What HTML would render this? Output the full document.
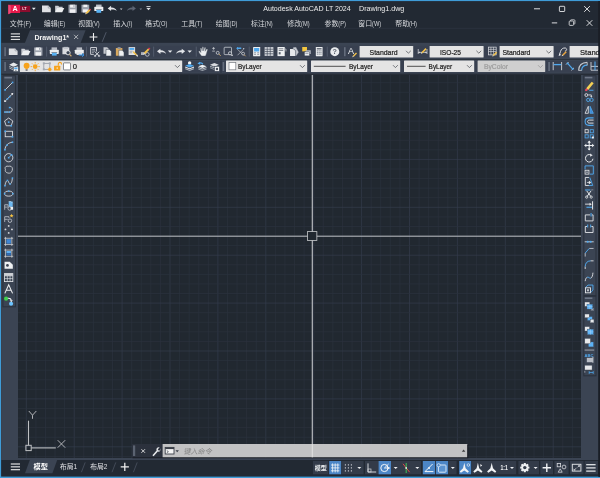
<!DOCTYPE html>
<html lang="zh-CN"><head><meta charset="utf-8"><title>Autodesk AutoCAD LT 2024 - Drawing1.dwg</title>
<style>
html,body{margin:0;padding:0;background:#3f9cd8;overflow:hidden}
body{width:600px;height:478px;position:relative;font-family:"Liberation Sans","Noto Sans CJK SC",sans-serif}
#app{position:absolute;left:0;top:0;width:600px;height:478px;display:block;will-change:transform;filter:blur(0.25px)}
#app text{font-family:"Liberation Sans","Noto Sans CJK SC",sans-serif}
</style></head><body>
<svg id="app" width="600" height="478" viewBox="0 0 600 478">
<rect x="0" y="0" width="600" height="478" fill="#3f9cd8" />
<rect x="1.1" y="1.1" width="598.9" height="475.5" fill="#222933" />
<rect x="598.6" y="1.1" width="1.4" height="475.5" fill="#191d25" />
<rect x="1.1" y="42.8" width="597.5" height="32.2" fill="#3b4453" />
<rect x="2.4" y="45.9" width="596" height="11.4" fill="#384050" />
<rect x="2.4" y="61" width="596" height="11.2" fill="#384050" />
<rect x="1.5" y="59.1" width="597.5" height="0.9" fill="#2a313c" />
<rect x="1.5" y="73.6" width="597.5" height="1.6" fill="#272d37" />
<rect x="220.6" y="60.4" width="0.8" height="12.6" fill="#2a313c" />
<rect x="1.1" y="75" width="16.9" height="385" fill="#3b4453" />
<rect x="581" y="75" width="17.6" height="385" fill="#3b4453" />
<rect x="1.1" y="458" width="597.5" height="2" fill="#3b4453" />
<rect x="18" y="75" width="563" height="383" fill="#212830" />
<g><line x1="26.30" y1="75" x2="26.30" y2="458" stroke="#363d4e" stroke-width="0.66" /><line x1="35.88" y1="75" x2="35.88" y2="458" stroke="#2b323e" stroke-width="0.7" /><line x1="45.46" y1="75" x2="45.46" y2="458" stroke="#2b323e" stroke-width="0.7" /><line x1="55.04" y1="75" x2="55.04" y2="458" stroke="#2b323e" stroke-width="0.7" /><line x1="64.62" y1="75" x2="64.62" y2="458" stroke="#2b323e" stroke-width="0.7" /><line x1="74.20" y1="75" x2="74.20" y2="458" stroke="#363d4e" stroke-width="0.66" /><line x1="83.78" y1="75" x2="83.78" y2="458" stroke="#2b323e" stroke-width="0.7" /><line x1="93.36" y1="75" x2="93.36" y2="458" stroke="#2b323e" stroke-width="0.7" /><line x1="102.94" y1="75" x2="102.94" y2="458" stroke="#2b323e" stroke-width="0.7" /><line x1="112.52" y1="75" x2="112.52" y2="458" stroke="#2b323e" stroke-width="0.7" /><line x1="122.10" y1="75" x2="122.10" y2="458" stroke="#363d4e" stroke-width="0.66" /><line x1="131.68" y1="75" x2="131.68" y2="458" stroke="#2b323e" stroke-width="0.7" /><line x1="141.26" y1="75" x2="141.26" y2="458" stroke="#2b323e" stroke-width="0.7" /><line x1="150.84" y1="75" x2="150.84" y2="458" stroke="#2b323e" stroke-width="0.7" /><line x1="160.42" y1="75" x2="160.42" y2="458" stroke="#2b323e" stroke-width="0.7" /><line x1="170.00" y1="75" x2="170.00" y2="458" stroke="#363d4e" stroke-width="0.66" /><line x1="179.58" y1="75" x2="179.58" y2="458" stroke="#2b323e" stroke-width="0.7" /><line x1="189.16" y1="75" x2="189.16" y2="458" stroke="#2b323e" stroke-width="0.7" /><line x1="198.74" y1="75" x2="198.74" y2="458" stroke="#2b323e" stroke-width="0.7" /><line x1="208.32" y1="75" x2="208.32" y2="458" stroke="#2b323e" stroke-width="0.7" /><line x1="217.90" y1="75" x2="217.90" y2="458" stroke="#363d4e" stroke-width="0.66" /><line x1="227.48" y1="75" x2="227.48" y2="458" stroke="#2b323e" stroke-width="0.7" /><line x1="237.06" y1="75" x2="237.06" y2="458" stroke="#2b323e" stroke-width="0.7" /><line x1="246.64" y1="75" x2="246.64" y2="458" stroke="#2b323e" stroke-width="0.7" /><line x1="256.22" y1="75" x2="256.22" y2="458" stroke="#2b323e" stroke-width="0.7" /><line x1="265.80" y1="75" x2="265.80" y2="458" stroke="#363d4e" stroke-width="0.66" /><line x1="275.38" y1="75" x2="275.38" y2="458" stroke="#2b323e" stroke-width="0.7" /><line x1="284.96" y1="75" x2="284.96" y2="458" stroke="#2b323e" stroke-width="0.7" /><line x1="294.54" y1="75" x2="294.54" y2="458" stroke="#2b323e" stroke-width="0.7" /><line x1="304.12" y1="75" x2="304.12" y2="458" stroke="#2b323e" stroke-width="0.7" /><line x1="313.70" y1="75" x2="313.70" y2="458" stroke="#363d4e" stroke-width="0.66" /><line x1="323.28" y1="75" x2="323.28" y2="458" stroke="#2b323e" stroke-width="0.7" /><line x1="332.86" y1="75" x2="332.86" y2="458" stroke="#2b323e" stroke-width="0.7" /><line x1="342.44" y1="75" x2="342.44" y2="458" stroke="#2b323e" stroke-width="0.7" /><line x1="352.02" y1="75" x2="352.02" y2="458" stroke="#2b323e" stroke-width="0.7" /><line x1="361.60" y1="75" x2="361.60" y2="458" stroke="#363d4e" stroke-width="0.66" /><line x1="371.18" y1="75" x2="371.18" y2="458" stroke="#2b323e" stroke-width="0.7" /><line x1="380.76" y1="75" x2="380.76" y2="458" stroke="#2b323e" stroke-width="0.7" /><line x1="390.34" y1="75" x2="390.34" y2="458" stroke="#2b323e" stroke-width="0.7" /><line x1="399.92" y1="75" x2="399.92" y2="458" stroke="#2b323e" stroke-width="0.7" /><line x1="409.50" y1="75" x2="409.50" y2="458" stroke="#363d4e" stroke-width="0.66" /><line x1="419.08" y1="75" x2="419.08" y2="458" stroke="#2b323e" stroke-width="0.7" /><line x1="428.66" y1="75" x2="428.66" y2="458" stroke="#2b323e" stroke-width="0.7" /><line x1="438.24" y1="75" x2="438.24" y2="458" stroke="#2b323e" stroke-width="0.7" /><line x1="447.82" y1="75" x2="447.82" y2="458" stroke="#2b323e" stroke-width="0.7" /><line x1="457.40" y1="75" x2="457.40" y2="458" stroke="#363d4e" stroke-width="0.66" /><line x1="466.98" y1="75" x2="466.98" y2="458" stroke="#2b323e" stroke-width="0.7" /><line x1="476.56" y1="75" x2="476.56" y2="458" stroke="#2b323e" stroke-width="0.7" /><line x1="486.14" y1="75" x2="486.14" y2="458" stroke="#2b323e" stroke-width="0.7" /><line x1="495.72" y1="75" x2="495.72" y2="458" stroke="#2b323e" stroke-width="0.7" /><line x1="505.30" y1="75" x2="505.30" y2="458" stroke="#363d4e" stroke-width="0.66" /><line x1="514.88" y1="75" x2="514.88" y2="458" stroke="#2b323e" stroke-width="0.7" /><line x1="524.46" y1="75" x2="524.46" y2="458" stroke="#2b323e" stroke-width="0.7" /><line x1="534.04" y1="75" x2="534.04" y2="458" stroke="#2b323e" stroke-width="0.7" /><line x1="543.62" y1="75" x2="543.62" y2="458" stroke="#2b323e" stroke-width="0.7" /><line x1="553.20" y1="75" x2="553.20" y2="458" stroke="#363d4e" stroke-width="0.66" /><line x1="562.78" y1="75" x2="562.78" y2="458" stroke="#2b323e" stroke-width="0.7" /><line x1="572.36" y1="75" x2="572.36" y2="458" stroke="#2b323e" stroke-width="0.7" /><line x1="18" y1="82.76" x2="581" y2="82.76" stroke="#2b323e" stroke-width="0.7" /><line x1="18" y1="92.34" x2="581" y2="92.34" stroke="#2b323e" stroke-width="0.7" /><line x1="18" y1="101.92" x2="581" y2="101.92" stroke="#2b323e" stroke-width="0.7" /><line x1="18" y1="111.50" x2="581" y2="111.50" stroke="#363d4e" stroke-width="0.66" /><line x1="18" y1="121.08" x2="581" y2="121.08" stroke="#2b323e" stroke-width="0.7" /><line x1="18" y1="130.66" x2="581" y2="130.66" stroke="#2b323e" stroke-width="0.7" /><line x1="18" y1="140.24" x2="581" y2="140.24" stroke="#2b323e" stroke-width="0.7" /><line x1="18" y1="149.82" x2="581" y2="149.82" stroke="#2b323e" stroke-width="0.7" /><line x1="18" y1="159.40" x2="581" y2="159.40" stroke="#363d4e" stroke-width="0.66" /><line x1="18" y1="168.98" x2="581" y2="168.98" stroke="#2b323e" stroke-width="0.7" /><line x1="18" y1="178.56" x2="581" y2="178.56" stroke="#2b323e" stroke-width="0.7" /><line x1="18" y1="188.14" x2="581" y2="188.14" stroke="#2b323e" stroke-width="0.7" /><line x1="18" y1="197.72" x2="581" y2="197.72" stroke="#2b323e" stroke-width="0.7" /><line x1="18" y1="207.30" x2="581" y2="207.30" stroke="#363d4e" stroke-width="0.66" /><line x1="18" y1="216.88" x2="581" y2="216.88" stroke="#2b323e" stroke-width="0.7" /><line x1="18" y1="226.46" x2="581" y2="226.46" stroke="#2b323e" stroke-width="0.7" /><line x1="18" y1="236.04" x2="581" y2="236.04" stroke="#2b323e" stroke-width="0.7" /><line x1="18" y1="245.62" x2="581" y2="245.62" stroke="#2b323e" stroke-width="0.7" /><line x1="18" y1="255.20" x2="581" y2="255.20" stroke="#363d4e" stroke-width="0.66" /><line x1="18" y1="264.78" x2="581" y2="264.78" stroke="#2b323e" stroke-width="0.7" /><line x1="18" y1="274.36" x2="581" y2="274.36" stroke="#2b323e" stroke-width="0.7" /><line x1="18" y1="283.94" x2="581" y2="283.94" stroke="#2b323e" stroke-width="0.7" /><line x1="18" y1="293.52" x2="581" y2="293.52" stroke="#2b323e" stroke-width="0.7" /><line x1="18" y1="303.10" x2="581" y2="303.10" stroke="#363d4e" stroke-width="0.66" /><line x1="18" y1="312.68" x2="581" y2="312.68" stroke="#2b323e" stroke-width="0.7" /><line x1="18" y1="322.26" x2="581" y2="322.26" stroke="#2b323e" stroke-width="0.7" /><line x1="18" y1="331.84" x2="581" y2="331.84" stroke="#2b323e" stroke-width="0.7" /><line x1="18" y1="341.42" x2="581" y2="341.42" stroke="#2b323e" stroke-width="0.7" /><line x1="18" y1="351.00" x2="581" y2="351.00" stroke="#363d4e" stroke-width="0.66" /><line x1="18" y1="360.58" x2="581" y2="360.58" stroke="#2b323e" stroke-width="0.7" /><line x1="18" y1="370.16" x2="581" y2="370.16" stroke="#2b323e" stroke-width="0.7" /><line x1="18" y1="379.74" x2="581" y2="379.74" stroke="#2b323e" stroke-width="0.7" /><line x1="18" y1="389.32" x2="581" y2="389.32" stroke="#2b323e" stroke-width="0.7" /><line x1="18" y1="398.90" x2="581" y2="398.90" stroke="#363d4e" stroke-width="0.66" /><line x1="18" y1="408.48" x2="581" y2="408.48" stroke="#2b323e" stroke-width="0.7" /><line x1="18" y1="418.06" x2="581" y2="418.06" stroke="#2b323e" stroke-width="0.7" /><line x1="18" y1="427.64" x2="581" y2="427.64" stroke="#2b323e" stroke-width="0.7" /><line x1="18" y1="437.22" x2="581" y2="437.22" stroke="#2b323e" stroke-width="0.7" /><line x1="18" y1="446.80" x2="581" y2="446.80" stroke="#363d4e" stroke-width="0.66" /><line x1="18" y1="456.38" x2="581" y2="456.38" stroke="#2b323e" stroke-width="0.7" /></g>
<line x1="18" y1="236.2" x2="581" y2="236.2" stroke="#c6c8cb" stroke-width="0.95" />
<line x1="312.3" y1="75" x2="312.3" y2="458" stroke="#bcbec2" stroke-width="1.15" />
<rect x="307.45" y="231.6" width="9.4" height="8.8" fill="#212830" stroke="#c9cbce" stroke-width="0.8"/>
<line x1="28.5" y1="420.7" x2="28.5" y2="445.4" stroke="#bfc1c4" stroke-width="1.1" />
<line x1="31.3" y1="447.9" x2="55.8" y2="447.9" stroke="#bfc1c4" stroke-width="1.1" />
<rect x="25.9" y="445.3" width="5.3" height="5.3" fill="none" stroke="#bfc1c4" stroke-width="1"/>
<path d="M28.8 411 L32.5 415.2 L36.3 411 M32.5 415.2 L32.5 418.8" fill="none" stroke="#bfc1c4" stroke-width="0.9" />
<path d="M57.7 440.2 L65.2 447.7 M65.2 440.2 L57.7 447.7" fill="none" stroke="#bfc1c4" stroke-width="0.9" />
<text x="263.3" y="10.7" font-size="7.55" fill="#ececec" text-anchor="start" textLength="87.4" lengthAdjust="spacingAndGlyphs">Autodesk AutoCAD LT 2024</text>
<text x="359" y="10.7" font-size="7.55" fill="#ececec" text-anchor="start" textLength="45.3" lengthAdjust="spacingAndGlyphs">Drawing1.dwg</text>
<g><text x="9.80" y="26.10" font-size="6.9" fill="#d6d8dc" textLength="13.8" lengthAdjust="spacingAndGlyphs">文件</text><text x="23.60" y="26.10" font-size="6.49" fill="#d6d8dc" textLength="7.29" lengthAdjust="spacingAndGlyphs">(F)</text></g>
<g><text x="43.80" y="26.10" font-size="6.9" fill="#d6d8dc" textLength="13.8" lengthAdjust="spacingAndGlyphs">编辑</text><text x="57.60" y="26.10" font-size="6.49" fill="#d6d8dc" textLength="7.61" lengthAdjust="spacingAndGlyphs">(E)</text></g>
<g><text x="78.30" y="26.10" font-size="6.9" fill="#d6d8dc" textLength="13.8" lengthAdjust="spacingAndGlyphs">视图</text><text x="92.10" y="26.10" font-size="6.49" fill="#d6d8dc" textLength="7.61" lengthAdjust="spacingAndGlyphs">(V)</text></g>
<g><text x="113.30" y="26.10" font-size="6.9" fill="#d6d8dc" textLength="13.8" lengthAdjust="spacingAndGlyphs">插入</text><text x="127.10" y="26.10" font-size="6.49" fill="#d6d8dc" textLength="5.39" lengthAdjust="spacingAndGlyphs">(I)</text></g>
<g><text x="145.30" y="26.10" font-size="6.9" fill="#d6d8dc" textLength="13.8" lengthAdjust="spacingAndGlyphs">格式</text><text x="159.10" y="26.10" font-size="6.49" fill="#d6d8dc" textLength="8.24" lengthAdjust="spacingAndGlyphs">(O)</text></g>
<g><text x="181.30" y="26.10" font-size="6.9" fill="#d6d8dc" textLength="13.8" lengthAdjust="spacingAndGlyphs">工具</text><text x="195.10" y="26.10" font-size="6.49" fill="#d6d8dc" textLength="7.29" lengthAdjust="spacingAndGlyphs">(T)</text></g>
<g><text x="215.80" y="26.10" font-size="6.9" fill="#d6d8dc" textLength="13.8" lengthAdjust="spacingAndGlyphs">绘图</text><text x="229.60" y="26.10" font-size="6.49" fill="#d6d8dc" textLength="7.92" lengthAdjust="spacingAndGlyphs">(D)</text></g>
<g><text x="251.05" y="26.10" font-size="6.9" fill="#d6d8dc" textLength="13.8" lengthAdjust="spacingAndGlyphs">标注</text><text x="264.85" y="26.10" font-size="6.49" fill="#d6d8dc" textLength="7.92" lengthAdjust="spacingAndGlyphs">(N)</text></g>
<g><text x="287.30" y="26.10" font-size="6.9" fill="#d6d8dc" textLength="13.8" lengthAdjust="spacingAndGlyphs">修改</text><text x="301.10" y="26.10" font-size="6.49" fill="#d6d8dc" textLength="8.56" lengthAdjust="spacingAndGlyphs">(M)</text></g>
<g><text x="324.55" y="26.10" font-size="6.9" fill="#d6d8dc" textLength="13.8" lengthAdjust="spacingAndGlyphs">参数</text><text x="338.35" y="26.10" font-size="6.49" fill="#d6d8dc" textLength="7.61" lengthAdjust="spacingAndGlyphs">(P)</text></g>
<g><text x="358.30" y="26.10" font-size="6.9" fill="#d6d8dc" textLength="13.8" lengthAdjust="spacingAndGlyphs">窗口</text><text x="372.10" y="26.10" font-size="6.49" fill="#d6d8dc" textLength="9.19" lengthAdjust="spacingAndGlyphs">(W)</text></g>
<g><text x="395.30" y="26.10" font-size="6.9" fill="#d6d8dc" textLength="13.8" lengthAdjust="spacingAndGlyphs">帮助</text><text x="409.10" y="26.10" font-size="6.49" fill="#d6d8dc" textLength="7.92" lengthAdjust="spacingAndGlyphs">(H)</text></g>
<line x1="534" y1="8.8" x2="540" y2="8.8" stroke="#dcdde0" stroke-width="1.0" />
<rect x="559.4" y="6.3" width="5.3" height="5.2" fill="none" stroke="#dcdde0" stroke-width="0.95" rx="0.6"/>
<path d="M584.2 6.1 L589.9 11.8 M589.9 6.1 L584.2 11.8" fill="none" stroke="#dcdde0" stroke-width="1.0" />
<line x1="551.8" y1="22.9" x2="557.2" y2="22.9" stroke="#dcdde0" stroke-width="1.0" />
<rect x="569.2" y="21" width="4.4" height="4.4" fill="none" stroke="#dcdde0" stroke-width="0.85" rx="0.8"/>
<path d="M570.6 21 V20.2 Q570.6 19.8 571.2 19.8 H574.2 Q574.9 19.8 574.9 20.5 V23.4 Q574.9 24 574.2 24 H573.6" fill="none" stroke="#dcdde0" stroke-width="0.8" />
<path d="M586.7 20.2 L592.3 25.8 M592.3 20.2 L586.7 25.8" fill="none" stroke="#dcdde0" stroke-width="1.0" />
<rect x="1.5" y="27.8" width="597.5" height="0.9" fill="#2c333f" />
<line x1="10.8" y1="33.9" x2="20" y2="33.9" stroke="#e8e8e8" stroke-width="1.1" />
<line x1="10.8" y1="36.65" x2="20" y2="36.65" stroke="#e8e8e8" stroke-width="1.1" />
<line x1="10.8" y1="39.4" x2="20" y2="39.4" stroke="#e8e8e8" stroke-width="1.1" />
<path d="M24.9 43 L30 30.2 H85.6 L80.6 43 Z" fill="#3b4453" stroke="none" stroke-width="1" />
<text x="34.5" y="39.6" font-size="7.6" fill="#f4f4f4" text-anchor="start" font-weight="bold" textLength="34.6" lengthAdjust="spacingAndGlyphs">Drawing1*</text>
<path d="M74 34.8 L78.2 39 M78.2 34.8 L74 39" fill="none" stroke="#c4c7cc" stroke-width="0.8" />
<path d="M89.6 37 H97.4 M93.5 33.1 V40.9" fill="none" stroke="#f0f0f0" stroke-width="1.1" />
<line x1="102.2" y1="41.8" x2="106.2" y2="32.2" stroke="#5a6373" stroke-width="0.8" />
<rect x="4.3" y="47.2" width="1.6" height="9" fill="#646d7c" />
<rect x="344" y="47.2" width="1.6" height="9" fill="#646d7c" />
<rect x="4.3" y="62" width="1.6" height="9" fill="#646d7c" />
<rect x="222.6" y="62" width="1.6" height="9" fill="#646d7c" />
<rect x="548.3" y="62" width="1.6" height="9" fill="#646d7c" />
<rect x="46.3" y="46.6" width="0.8" height="10" fill="#596272" />
<rect x="86.2" y="46.6" width="0.8" height="10" fill="#596272" />
<rect x="153.3" y="46.6" width="0.8" height="10" fill="#596272" />
<rect x="195.8" y="46.6" width="0.8" height="10" fill="#596272" />
<rect x="248.8" y="46.6" width="0.8" height="10" fill="#596272" />
<rect x="326.8" y="46.6" width="0.8" height="10" fill="#596272" />
<rect x="359.6" y="46" width="53.6" height="11.6" fill="#e4e4e4" rx="0.6"/>
<text x="369.6" y="54.55" font-size="7.6" fill="#1c1c1c" text-anchor="start" textLength="28" lengthAdjust="spacingAndGlyphs" stroke="#1c1c1c" stroke-width="0.22">Standard</text>
<path d="M406.00 50.80 L408.40 53.20 L410.80 50.80" fill="none" stroke="#55595f" stroke-width="0.8" />
<rect x="429.6" y="46" width="54" height="11.6" fill="#e4e4e4" rx="0.6"/>
<text x="440" y="54.55" font-size="7.6" fill="#1c1c1c" text-anchor="start" textLength="21" lengthAdjust="spacingAndGlyphs" stroke="#1c1c1c" stroke-width="0.22">ISO-25</text>
<path d="M476.40 50.80 L478.80 53.20 L481.20 50.80" fill="none" stroke="#55595f" stroke-width="0.8" />
<rect x="499.6" y="46" width="54" height="11.6" fill="#e4e4e4" rx="0.6"/>
<text x="502.4" y="54.55" font-size="7.6" fill="#1c1c1c" text-anchor="start" textLength="28" lengthAdjust="spacingAndGlyphs" stroke="#1c1c1c" stroke-width="0.22">Standard</text>
<path d="M546.40 50.80 L548.80 53.20 L551.20 50.80" fill="none" stroke="#55595f" stroke-width="0.8" />
<rect x="569.6" y="46" width="29.4" height="11.6" fill="#e4e4e4" rx="0.6"/>
<text x="580" y="54.55" font-size="7.6" fill="#1c1c1c" text-anchor="start"  stroke="#1c1c1c" stroke-width="0.22">Stand</text>
<rect x="19.8" y="60.4" width="162.4" height="11.6" fill="#e4e4e4" rx="0.6"/>
<text x="72.7" y="68.95" font-size="7.6" fill="#1c1c1c" text-anchor="start"  stroke="#1c1c1c" stroke-width="0.22">0</text>
<path d="M175.00 65.20 L177.40 67.60 L179.80 65.20" fill="none" stroke="#55595f" stroke-width="0.8" />
<rect x="226" y="60.4" width="81.2" height="11.6" fill="#e4e4e4" rx="0.6"/>
<text x="238" y="68.95" font-size="7.6" fill="#1c1c1c" text-anchor="start" textLength="23.6" lengthAdjust="spacingAndGlyphs" stroke="#1c1c1c" stroke-width="0.22">ByLayer</text>
<path d="M300.00 65.20 L302.40 67.60 L304.80 65.20" fill="none" stroke="#55595f" stroke-width="0.8" />
<rect x="229" y="62.6" width="6.8" height="7.2" fill="#ffffff" stroke="#777b82" stroke-width="0.7"/>
<rect x="311" y="60.4" width="89.2" height="11.6" fill="#e4e4e4" rx="0.6"/>
<text x="349" y="68.95" font-size="7.6" fill="#1c1c1c" text-anchor="start" textLength="24" lengthAdjust="spacingAndGlyphs" stroke="#1c1c1c" stroke-width="0.22">ByLayer</text>
<path d="M393.00 65.20 L395.40 67.60 L397.80 65.20" fill="none" stroke="#55595f" stroke-width="0.8" />
<line x1="313.8" y1="66.3" x2="345.6" y2="66.3" stroke="#2a2a2a" stroke-width="0.8" />
<rect x="404" y="60.4" width="70.2" height="11.6" fill="#e4e4e4" rx="0.6"/>
<text x="428.6" y="68.95" font-size="7.6" fill="#1c1c1c" text-anchor="start" textLength="23.6" lengthAdjust="spacingAndGlyphs" stroke="#1c1c1c" stroke-width="0.22">ByLayer</text>
<path d="M467.00 65.20 L469.40 67.60 L471.80 65.20" fill="none" stroke="#55595f" stroke-width="0.8" />
<line x1="407" y1="66.3" x2="425.6" y2="66.3" stroke="#2a2a2a" stroke-width="0.8" />
<rect x="477.6" y="60.4" width="67.6" height="11.6" fill="#cfcfcf" rx="0.6"/>
<text x="484" y="68.95" font-size="7.6" fill="#9c9c9c" text-anchor="start" textLength="24" lengthAdjust="spacingAndGlyphs" stroke="#9c9c9c" stroke-width="0.22">ByColor</text>
<path d="M538.00 65.20 L540.40 67.60 L542.80 65.20" fill="none" stroke="#9a9a9a" stroke-width="0.8" />
<line x1="10.8" y1="464.0" x2="20" y2="464.0" stroke="#e8e8e8" stroke-width="1.15" />
<line x1="10.8" y1="466.85" x2="20" y2="466.85" stroke="#e8e8e8" stroke-width="1.15" />
<line x1="10.8" y1="469.7" x2="20" y2="469.7" stroke="#e8e8e8" stroke-width="1.15" />
<path d="M25 473.2 L29.8 460 H57.2 L52.4 473.2 Z" fill="#3b4453" stroke="none" stroke-width="1" />
<g><text x="33.50" y="469.30" font-size="7.2" font-weight="bold" fill="#ffffff" textLength="14.4" lengthAdjust="spacingAndGlyphs">模型</text></g>
<g><text x="60.00" y="469.30" font-size="6.8" fill="#e0e1e4" textLength="13.6" lengthAdjust="spacingAndGlyphs">布局</text><text x="73.60" y="469.30" font-size="6.46" fill="#e0e1e4">1</text></g>
<line x1="81.4" y1="472.2" x2="85.2" y2="462.4" stroke="#4a5261" stroke-width="0.8" />
<g><text x="90.20" y="469.30" font-size="6.8" fill="#e0e1e4" textLength="13.6" lengthAdjust="spacingAndGlyphs">布局</text><text x="103.80" y="469.30" font-size="6.46" fill="#e0e1e4">2</text></g>
<line x1="112" y1="472.2" x2="115.8" y2="462.4" stroke="#4a5261" stroke-width="0.8" />
<path d="M120.7 466.9 H128.9 M124.8 462.8 V471" fill="none" stroke="#f0f0f0" stroke-width="1.25" />
<line x1="133.4" y1="472.2" x2="137.2" y2="462.4" stroke="#4a5261" stroke-width="0.8" />
<rect x="132" y="444" width="30.8" height="13.6" fill="#2c323d" opacity="0.95"/>
<rect x="133" y="445.4" width="2.2" height="10.6" fill="#5b6371" />
<path d="M141.4 449.2 L145 452.8 M145 449.2 L141.4 452.8" fill="none" stroke="#e4e4e4" stroke-width="0.9" />
<rect x="162.6" y="444" width="304.8" height="13.5" fill="#c9c9c9" opacity="0.96"/>
<line x1="312.3" y1="444" x2="312.3" y2="457.6" stroke="#e0e0e0" stroke-width="1.0" />
<g transform="translate(183.4 453.6) skewX(-12) translate(-183.4 -453.6)"><text x="183.40" y="453.60" font-size="7.1" fill="#858585" textLength="28.4" lengthAdjust="spacingAndGlyphs">键入命令</text></g>
<path d="M461.9 451.8 L463.6 449.4 L465.3 451.8 Z" fill="#3c3c3c" stroke="none" stroke-width="1" />
<rect x="467.4" y="444.6" width="0.8" height="13.4" fill="#14181e" />
<rect x="132.6" y="457.5" width="335.6" height="0.7" fill="#14181e" />
<path d="M8.3 4.7 H20 V13 H10.7 L8.3 14.2 Z" fill="#e6194b" stroke="none" stroke-width="1" />
<path d="M8.3 4.7 L10.7 5.6 V13 L8.3 14.2 Z" fill="#ee4a78" stroke="none" stroke-width="1" />
<text x="15.1" y="11.1" font-size="7.2" fill="#ffffff" text-anchor="middle" font-weight="bold" >A</text>
<rect x="20" y="5.8" width="10.3" height="6.2" fill="#8c0d2e" />
<text x="24.3" y="10.3" font-size="3.7" fill="#f3e4e8" text-anchor="middle" font-weight="bold" >LT</text>
<path d="M31.90 7.70 H35.70 L33.80 9.90 Z" fill="#eceef1"/>
<g transform="translate(41.4 3.7) scale(0.625)"><path d="M1 3 H11 L15 7 V13.6 H1 Z" fill="#dfe0e3" stroke="none" stroke-width="1" /><path d="M11 3 V7 H15" fill="none" stroke="#8e939c" stroke-width="1" /></g>
<g transform="translate(54.5 3.7) scale(0.625)"><path d="M1 13.8 V3.4 H6 L7.4 5 H13 V7" fill="#c9ccd2" stroke="none" stroke-width="1" /><path d="M1 13.8 L4.2 7 H15.6 L12.4 13.8 Z" fill="#eceef0" stroke="none" stroke-width="1" /></g>
<g transform="translate(67.6 3.7) scale(0.625)"><rect x="1.4" y="1.6" width="13.4" height="13" fill="#9ea3ad" stroke="none" stroke-width="1" /><rect x="4" y="1.6" width="8" height="4.6" fill="#f0f1f3" stroke="none" stroke-width="1" /><rect x="3.6" y="9" width="9" height="5.6" fill="#f0f1f3" stroke="none" stroke-width="1" /><rect x="9.4" y="2.2" width="1.6" height="3.2" fill="#9ea3ad" stroke="none" stroke-width="1" /></g>
<g transform="translate(80.6 3.7) scale(0.625)"><rect x="1.4" y="1.6" width="12.4" height="12.4" fill="#9ea3ad" stroke="none" stroke-width="1" /><rect x="4.4" y="1.6" width="6.4" height="3.8" fill="#f0f1f3" stroke="none" stroke-width="1" /><rect x="3.8" y="9" width="7.8" height="5" fill="#f0f1f3" stroke="none" stroke-width="1" /><path d="M8 14.4 L13.6 8.8 L15.6 10.8 L10 16.4 Z" fill="#f2c14a" stroke="none" stroke-width="1" /><path d="M13.6 8.8 L14.8 7.6 L16.8 9.6 L15.6 10.8 Z" fill="#e0364e" stroke="none" stroke-width="1" /><path d="M8 14.4 L7.4 17 L10 16.4 Z" fill="#f4e6c8" stroke="none" stroke-width="1" /></g>
<g transform="translate(93.8 3.7) scale(0.625)"><rect x="3.6" y="1.4" width="8.8" height="4" fill="#b9bdc5" stroke="none" stroke-width="1" /><rect x="0.8" y="5" width="14.4" height="6.8" fill="#eceef0" stroke="none" stroke-width="1" rx="1"/><rect x="4.2" y="9.8" width="7.6" height="4.8" fill="#58b2f4" stroke="none" stroke-width="1" /><rect x="3.4" y="8.8" width="9.2" height="1.1" fill="#6a717d" stroke="none" stroke-width="1" /></g>
<g transform="translate(107.2 3.7) scale(0.625)"><path d="M0.8 7.6 L6.2 3.4 V6 C10.8 5.8 14.2 7.6 15.2 11.8 C12.8 9.6 10.2 9.2 6.2 9.4 V11.8 Z" fill="#e2e4e8" stroke="none" stroke-width="1" /></g>
<path d="M119.90 8.40 H122.50 L121.20 10.00 Z" fill="#c9ccd2"/>
<g transform="translate(126.4 3.7) scale(0.625)"><path d="M15.2 7.6 L9.8 3.4 V6 C5.2 5.8 1.8 7.6 0.8 11.8 C3.2 9.6 5.8 9.2 9.8 9.4 V11.8 Z" fill="#5d6573" stroke="none" stroke-width="1" /></g>
<path d="M139.50 8.40 H142.10 L140.80 10.00 Z" fill="#808896"/>
<line x1="146.4" y1="6.6" x2="150.6" y2="6.6" stroke="#dfe1e4" stroke-width="0.9" />
<path d="M146.40 8.00 H150.60 L148.50 10.20 Z" fill="#dfe1e4"/>
<g transform="translate(8.2 46.5) scale(0.625)"><path d="M1 3 H11 L15 7 V13.6 H1 Z" fill="#dfe0e3" stroke="none" stroke-width="1" /><path d="M11 3 V7 H15" fill="none" stroke="#8e939c" stroke-width="1" /></g>
<g transform="translate(20.7 46.5) scale(0.625)"><path d="M1 13.8 V3.4 H6 L7.4 5 H13 V7" fill="#c9ccd2" stroke="none" stroke-width="1" /><path d="M1 13.8 L4.2 7 H15.6 L12.4 13.8 Z" fill="#eceef0" stroke="none" stroke-width="1" /></g>
<g transform="translate(33.2 46.5) scale(0.625)"><rect x="1.4" y="1.6" width="13.4" height="13" fill="#9ea3ad" stroke="none" stroke-width="1" /><rect x="4" y="1.6" width="8" height="4.6" fill="#f0f1f3" stroke="none" stroke-width="1" /><rect x="3.6" y="9" width="9" height="5.6" fill="#f0f1f3" stroke="none" stroke-width="1" /><rect x="9.4" y="2.2" width="1.6" height="3.2" fill="#9ea3ad" stroke="none" stroke-width="1" /></g>
<g transform="translate(49.3 46.5) scale(0.625)"><rect x="3.6" y="1.4" width="8.8" height="4" fill="#b9bdc5" stroke="none" stroke-width="1" /><rect x="0.8" y="5" width="14.4" height="6.8" fill="#eceef0" stroke="none" stroke-width="1" rx="1"/><rect x="4.2" y="9.8" width="7.6" height="4.8" fill="#58b2f4" stroke="none" stroke-width="1" /><rect x="3.4" y="8.8" width="9.2" height="1.1" fill="#6a717d" stroke="none" stroke-width="1" /></g>
<g transform="translate(61.8 46.5) scale(0.625)"><rect x="1" y="1.4" width="11" height="11" fill="#d9dbdf" stroke="none" stroke-width="1" /><rect x="3" y="0.6" width="7" height="3" fill="#b9bdc5" stroke="none" stroke-width="1" /><circle cx="10" cy="10" r="3.4" fill="#3b4453" stroke="#eceef0" stroke-width="1.4"/><path d="M12.4 12.6 L15.4 15.6" fill="none" stroke="#d8b070" stroke-width="1.8" /></g>
<g transform="translate(74.3 46.5) scale(0.625)"><rect x="3.6" y="1.4" width="8.8" height="4" fill="#b9bdc5" stroke="none" stroke-width="1" /><rect x="0.8" y="5" width="14.4" height="6.4" fill="#eceef0" stroke="none" stroke-width="1" rx="1"/><rect x="3.6" y="9" width="8.8" height="4.6" fill="#dfe1e4" stroke="none" stroke-width="1" /><path d="M7 13.6 H15.4 M12.6 11 L15.4 13.6 L12.6 16.2" fill="none" stroke="#3f9df0" stroke-width="1.6" /></g>
<g transform="translate(90 46.5) scale(0.625)"><path d="M1 1.6 H10.4 V8 M1 1.6 V12.6 H6" fill="none" stroke="#dcdee2" stroke-width="1.4" /><path d="M3 4.6 H8.4 M3 7.2 H8.4 M3 9.8 H6" fill="none" stroke="#c6c9cf" stroke-width="1.1" /><path d="M8 8.4 L14.6 15 M14.6 8.4 L8 15" fill="none" stroke="#eceef0" stroke-width="1.4" /><circle cx="8.2" cy="15" r="1.3" fill="none" stroke="#eceef0" stroke-width="1"/><circle cx="14.4" cy="15" r="1.3" fill="none" stroke="#eceef0" stroke-width="1"/></g>
<g transform="translate(102.5 46.5) scale(0.625)"><path d="M1.6 1 H7.4 L10 3.6 V11.4 H1.6 Z" fill="#c4c7cd" stroke="none" stroke-width="1" /><path d="M5.6 4.6 H11 L14 7.6 V15.2 H5.6 Z" fill="#eef0f2" stroke="#3b4453" stroke-width="0.8" /></g>
<g transform="translate(115 46.5) scale(0.625)"><rect x="1.4" y="2.4" width="10.4" height="12.4" fill="#d9a95e" stroke="none" stroke-width="1" rx="0.8"/><rect x="4.2" y="1" width="4.8" height="2.8" fill="#8b919c" stroke="none" stroke-width="1" /><path d="M6 6 H11.4 L14.4 9 V15.4 H6 Z" fill="#f0f1f3" stroke="#3b4453" stroke-width="0.8" /></g>
<g transform="translate(127.6 46.5) scale(0.625)"><rect x="1.6" y="1" width="10.4" height="12.6" fill="#dfe1e4" stroke="none" stroke-width="1" /><rect x="3" y="2.4" width="7.6" height="3" fill="#4fa8ee" stroke="none" stroke-width="1" /><path d="M3.2 7.6 H8 M3.2 10 H7" fill="none" stroke="#8e939c" stroke-width="1.1" /><path d="M8 9 L13.4 14.4 L15.2 12.6 L9.8 7.2 Z" fill="#f2c14a" stroke="none" stroke-width="1" /><path d="M13.4 14.4 L15.6 16.4 L16.8 15.2 L15.2 12.6 Z" fill="#f3f0e6" stroke="none" stroke-width="1" /></g>
<g transform="translate(140.4 46.5) scale(0.625)"><path d="M1 9 H6.4 V13.6 H1 Z" fill="#aeb3bc" stroke="none" stroke-width="1" /><circle cx="11" cy="12.6" r="3" fill="none" stroke="#c3c7ce" stroke-width="1.4"/><path d="M5.6 9.6 L12.2 3 L14.4 5.2 L7.8 11.8 Z" fill="#f2c14a" stroke="none" stroke-width="1" /><path d="M12.2 3 L13.8 1.4 L16 3.6 L14.4 5.2 Z" fill="#e0364e" stroke="none" stroke-width="1" /><path d="M5.6 9.6 L4.8 12.6 L7.8 11.8 Z" fill="#f4ead0" stroke="none" stroke-width="1" /></g>
<g transform="translate(156.5 46.5) scale(0.625)"><path d="M0.8 7.6 L6.2 3.4 V6 C10.8 5.8 14.2 7.6 15.2 11.8 C12.8 9.6 10.2 9.2 6.2 9.4 V11.8 Z" fill="#e2e4e8" stroke="none" stroke-width="1" /></g>
<g transform="translate(175.6 46.5) scale(0.625)"><path d="M15.2 7.6 L9.8 3.4 V6 C5.2 5.8 1.8 7.6 0.8 11.8 C3.2 9.6 5.8 9.2 9.8 9.4 V11.8 Z" fill="#e2e4e8" stroke="none" stroke-width="1" /></g>
<g transform="translate(198.4 46.5) scale(0.625)"><path d="M5 15.2 C3.2 12.8 1.6 10.8 0.6 8.6 C0.2 7.4 1.6 6.8 2.6 7.8 L4 9.6 L3.2 3.4 C3 2 4.8 1.8 5.2 3.2 L6 7 L6.2 1.6 C6.2 0.2 8.2 0.2 8.2 1.6 L8.4 7 L9.6 2.2 C10 0.8 11.8 1.2 11.6 2.6 L10.8 7.6 L12.8 4.4 C13.6 3.2 15.2 4 14.6 5.4 C13.4 8.4 13 11.6 11.4 15.2 Z" fill="#eceef0" stroke="#4a5261" stroke-width="0.6" /></g>
<g transform="translate(211.2 46.5) scale(0.625)"><path d="M1.6 3 H6 M3.8 0.8 V5.2 M1.6 7.4 H6" fill="none" stroke="#d3d6db" stroke-width="1.1" /><circle cx="10.4" cy="10.2" r="2.4" fill="none" stroke="#d3d6db" stroke-width="1.2"/><path d="M12.2 12 L15.2 15" fill="none" stroke="#d8b070" stroke-width="1.5" /></g>
<g transform="translate(223.4 46.5) scale(0.625)"><rect x="1.2" y="1.2" width="11.8" height="11.8" fill="none" stroke="#c3c7ce" stroke-width="1.3" rx="1.2"/><circle cx="10.6" cy="10.8" r="2.5" fill="#3b4453" stroke="#dfe1e5" stroke-width="1.2"/><circle cx="13.8" cy="14" r="1.3" fill="#f4f5f6" stroke="none" stroke-width="1"/></g>
<g transform="translate(236 46.5) scale(0.625)"><path d="M2.4 4.4 L12 14 M12 4.4 L2.4 14" fill="none" stroke="#c3c7ce" stroke-width="1.1" /><path d="M1.4 2.8 H8.4" fill="none" stroke="#4fa8ee" stroke-width="2.4" /><path d="M0.4 2.8 L3.2 0.6 V5 Z" fill="#4fa8ee" stroke="none" stroke-width="1" /><rect x="11.4" y="2.4" width="1.8" height="1.8" fill="#c3c7ce" stroke="none" stroke-width="1" /><circle cx="11.4" cy="11.4" r="2.3" fill="#3b4453" stroke="#dfe1e5" stroke-width="1.1"/><path d="M13 13.2 L15.4 15.6" fill="none" stroke="#d8b070" stroke-width="1.4" /></g>
<g transform="translate(251.6 46.5) scale(0.625)"><rect x="2.4" y="0.8" width="11.4" height="14.6" fill="#eceef0" stroke="none" stroke-width="1" rx="0.8"/><rect x="4" y="2.4" width="8.2" height="5.6" fill="#4fa8ee" stroke="none" stroke-width="1" /><path d="M4 10 H7 M4 12.6 H7 M9 10 H12 M9 12.6 H12" fill="none" stroke="#7f8692" stroke-width="1.3" /></g>
<g transform="translate(264 46.5) scale(0.625)"><rect x="1" y="1" width="14" height="14" fill="#d4d7dc" stroke="none" stroke-width="1" /><path d="M5.2 1 V15 M10 1 V15 M1 4.4 H15 M1 8 H15 M1 11.6 H15" fill="none" stroke="#3b4453" stroke-width="1" /></g>
<g transform="translate(276.6 46.5) scale(0.625)"><rect x="1.4" y="0.8" width="11.6" height="14.6" fill="#eef0f2" stroke="none" stroke-width="1" /><path d="M3.4 3.6 H10.6 M3.4 6.4 H10.6" fill="none" stroke="#59616e" stroke-width="1.2" /><rect x="3.4" y="9" width="3" height="3.6" fill="#59616e" stroke="none" stroke-width="1" /><path d="M13 4 H15 V8" fill="none" stroke="#c3c7ce" stroke-width="1.2" /></g>
<g transform="translate(289.4 46.5) scale(0.625)"><path d="M1 4 H7 L10 7 V15 H1 Z" fill="#e6e8eb" stroke="none" stroke-width="1" /><path d="M6 1 L10.6 0.8 L15 9 L11 15 H10 V7 L7 4 H5.4 Z" fill="#c3c7ce" stroke="#3b4453" stroke-width="0.6" /></g>
<g transform="translate(301.6 46.5) scale(0.625)"><rect x="1" y="0.8" width="7.6" height="7" fill="#f3c640" stroke="none" stroke-width="1" /><rect x="6.6" y="6" width="8" height="6" fill="#b5bac3" stroke="none" stroke-width="1" /><rect x="4.6" y="8.6" width="8" height="6.4" fill="#eceef0" stroke="#3b4453" stroke-width="0.7" /><path d="M6 11 H11" fill="none" stroke="#7f8692" stroke-width="1.2" /></g>
<g transform="translate(314.2 46.5) scale(0.625)"><rect x="2.6" y="0.8" width="10.8" height="14.6" fill="#eceef0" stroke="none" stroke-width="1" rx="0.6"/><rect x="4.2" y="2.4" width="7.6" height="2.4" fill="#6e7581" stroke="none" stroke-width="1" /><path d="M4.2 7 H6.2 M7 7 H9 M9.8 7 H11.8 M4.2 9.6 H6.2 M7 9.6 H9 M9.8 9.6 H11.8 M4.2 12.2 H6.2 M7 12.2 H9 M9.8 12.2 H11.8" fill="none" stroke="#8d939d" stroke-width="1.7" /></g>
<g transform="translate(329.8 46.5) scale(0.625)"><circle cx="8" cy="8.2" r="7.2" fill="#e9ebee" stroke="none" stroke-width="1"/><text x="8" y="12.2" font-size="11.5" font-weight="bold" fill="#5a616d" text-anchor="middle">?</text></g>
<g transform="translate(347.6 46.5) scale(0.625)"><text x="5.6" y="11.4" font-size="14.5" fill="#eceef0" text-anchor="middle">A</text><path d="M8.4 14.6 L13.4 9.6 L15 11.2 L10 16.2 Z" fill="#f2c14a" stroke="none" stroke-width="1" /><path d="M8.4 14.6 L7.4 17.2 L10 16.2 Z" fill="#f3ecd8" stroke="none" stroke-width="1" /></g>
<g transform="translate(417.6 46.5) scale(0.625)"><path d="M1 4 V12 M15 4 V12 M1 9.4 H15" fill="none" stroke="#d8dade" stroke-width="1.2" /><path d="M1 9.4 L3.6 8 V10.8 Z M15 9.4 L12.4 8 V10.8 Z" fill="#d8dade" stroke="none" stroke-width="1" /><path d="M6 9 L12.6 2.4 L14.4 4.2 L7.8 10.8 Z" fill="#f2c14a" stroke="none" stroke-width="1" /><path d="M6 9 L5.2 11.6 L7.8 10.8 Z" fill="#f3ecd8" stroke="none" stroke-width="1" /></g>
<g transform="translate(487.8 46.5) scale(0.625)"><rect x="1" y="1" width="12.4" height="12.4" fill="none" stroke="#d8dade" stroke-width="1.2" /><path d="M1 4.6 H13.4 M5 1 V13.4 M9.2 1 V13.4 M1 8 H13.4" fill="none" stroke="#d8dade" stroke-width="1" /><path d="M8 13.4 L13.2 8.2 L15 10 L9.8 15.2 Z" fill="#f2c14a" stroke="none" stroke-width="1" /><path d="M8 13.4 L7.2 16 L9.8 15.2 Z" fill="#f3ecd8" stroke="none" stroke-width="1" /></g>
<g transform="translate(558 46.5) scale(0.625)"><path d="M2 14 L4 8 C5 4 8 2 11.6 2.4 C14.6 3 14.6 7 11 7.4" fill="none" stroke="#e6e8eb" stroke-width="1.5" /><path d="M1 15 L2.4 11 L5 13.6 Z" fill="#e6e8eb" stroke="none" stroke-width="1" /><path d="M6.6 13 L12.2 7.4 L14 9.2 L8.4 14.8 Z" fill="#e8a540" stroke="none" stroke-width="1" /><path d="M6.6 13 L5.8 15.6 L8.4 14.8 Z" fill="#f3ecd8" stroke="none" stroke-width="1" /></g>
<path d="M167.90 50.40 H172.30 L170.10 52.80 Z" fill="#eceef1"/>
<path d="M187.50 50.40 H191.90 L189.70 52.80 Z" fill="#eceef1"/>
<g transform="translate(8.6 61.5) scale(0.625)"><path d="M1 5 L8 1.4 L15 5 L8 8.6 Z" fill="#e6e8eb" stroke="none" stroke-width="1" /><path d="M1 7.6 L8 11.2 L15 7.6 M1 10.2 L8 13.8 L15 10.2" fill="none" stroke="#c3c7ce" stroke-width="1.3" /><rect x="7.6" y="8.6" width="8" height="7.4" fill="#eef0f2" stroke="#3b4453" stroke-width="0.8" /><rect x="9" y="9.8" width="5.2" height="2.4" fill="#4fa8ee" stroke="none" stroke-width="1" /><rect x="10.6" y="13.2" width="2" height="1.6" fill="#59616e" stroke="none" stroke-width="1" /></g>
<g transform="translate(21.6 61.5) scale(0.625)"><circle cx="8" cy="6.6" r="4.7" fill="#f6a21c" stroke="none" stroke-width="1"/><rect x="6.2" y="10.6" width="3.6" height="2" fill="#f6a21c" stroke="none" stroke-width="1" /><rect x="6.4" y="12.8" width="3.2" height="1.8" fill="#4a4f59" stroke="none" stroke-width="1" /></g>
<g transform="translate(30.2 61.6) scale(0.625)"><circle cx="8" cy="8" r="3.8" fill="#f6a21c" stroke="none" stroke-width="1"/><path d="M8 0.6 V3 M8 13 V15.4 M0.6 8 H3 M13 8 H15.4 M2.8 2.8 L4.5 4.5 M11.5 11.5 L13.2 13.2 M13.2 2.8 L11.5 4.5 M4.5 11.5 L2.8 13.2" fill="none" stroke="#f6a21c" stroke-width="1.3" /></g>
<g transform="translate(42.2 61.7) scale(0.625)"><rect x="2.6" y="2.6" width="9.6" height="9.6" fill="none" stroke="#8c929c" stroke-width="1.2" /><rect x="1" y="1" width="3.2" height="3.2" fill="#a4a9b2" stroke="none" stroke-width="1" /><rect x="10.6" y="1" width="3.2" height="3.2" fill="#a4a9b2" stroke="none" stroke-width="1" /><rect x="1" y="10.6" width="3.2" height="3.2" fill="#a4a9b2" stroke="none" stroke-width="1" /><circle cx="12.2" cy="12.4" r="2.3" fill="#f6a21c" stroke="none" stroke-width="1"/><path d="M12.2 8.6 V16.2 M8.4 12.4 H16 M9.6 9.8 L14.8 15 M14.8 9.8 L9.6 15" fill="none" stroke="#f6a21c" stroke-width="0.8" /></g>
<g transform="translate(52.4 61.1) scale(0.625)"><rect x="2.6" y="7.4" width="10" height="7.6" fill="#f6a21c" stroke="none" stroke-width="1" rx="0.8"/><path d="M9.4 7.4 V4.6 C9.4 1.2 14.6 1.2 14.6 4.6 V5.6" fill="none" stroke="#f6a21c" stroke-width="1.7" /><rect x="6.8" y="9.8" width="1.8" height="2.8" fill="#fbe3b4" stroke="none" stroke-width="1" /></g>
<rect x="63.5" y="62.9" width="7" height="7" fill="#ffffff" stroke="#4d5158" stroke-width="0.65" rx="0.6"/>
<g transform="translate(184.6 61.2) scale(0.625)"><circle cx="8" cy="2.8" r="2.7" fill="#f2f3f5" stroke="none" stroke-width="1"/><path d="M1 7.4 L8 4.6 L15 7.4 L8 10.2 Z" fill="#4fa8ee" stroke="none" stroke-width="1" /><path d="M1 8.6 L8 11.2 L15 8.6 V10.299999999999999 L8 12.899999999999999 L1 10.299999999999999 Z" fill="#e3e5e9" stroke="none" stroke-width="1" /><path d="M1 11.2 L8 13.799999999999999 L15 11.2 V12.899999999999999 L8 15.5 L1 12.899999999999999 Z" fill="#aab0ba" stroke="none" stroke-width="1" /></g>
<g transform="translate(197 61.3) scale(0.625)"><path d="M2 8 L8.6 5.4 L15.2 8 L8.6 10.6 Z" fill="#eceef0" stroke="none" stroke-width="1" /><path d="M2 9.0 L8.6 11.6 L15.2 9.0 V10.7 L8.6 13.3 L2 10.7 Z" fill="#c3c7ce" stroke="none" stroke-width="1" /><path d="M2 11.4 L8.6 14.0 L15.2 11.4 V13.1 L8.6 15.7 L2 13.1 Z" fill="#9aa0ab" stroke="none" stroke-width="1" /><path d="M9.4 4.6 C7.4 2 4.8 2.2 3.6 3.4" fill="none" stroke="#4fa8ee" stroke-width="1.8" /><path d="M0.6 3.4 L4.8 0.6 L5 5.6 Z" fill="#4fa8ee" stroke="none" stroke-width="1" /></g>
<g transform="translate(209.4 61.5) scale(0.625)"><path d="M1 5.2 L8 2.2 L15 5.2 L8 8.2 Z" fill="#d9dbdf" stroke="none" stroke-width="1" /><path d="M1 6.6 L8 9.2 L15 6.6 V8.299999999999999 L8 10.899999999999999 L1 8.299999999999999 Z" fill="#aab0ba" stroke="none" stroke-width="1" /><path d="M1 9.2 L8 11.799999999999999 L15 9.2 V10.899999999999999 L8 13.5 L1 10.899999999999999 Z" fill="#8d939e" stroke="none" stroke-width="1" /><rect x="8.4" y="8.2" width="7.4" height="7.4" fill="#f2f3f5" stroke="#3b4453" stroke-width="0.8" /><rect x="10.4" y="10.2" width="3.4" height="3.6" fill="#4a515d" stroke="none" stroke-width="1" /></g>
<path d="M553.2 62 V70.2 M561.6 62 V70.2" fill="none" stroke="#bfc3ca" stroke-width="1.0" />
<line x1="553.6" y1="64.6" x2="561.2" y2="64.6" stroke="#4fa8ee" stroke-width="1.3" />
<path d="M566 64.6 L568.6 62 M571.4 70.4 L574 67.8" fill="none" stroke="#bfc3ca" stroke-width="1.0" />
<line x1="567.4" y1="63.2" x2="572.8" y2="69.2" stroke="#4fa8ee" stroke-width="1.2" />
<rect x="566.7" y="62.6" width="1.6" height="1.6" fill="#4fa8ee" />
<rect x="571.9" y="68.3" width="1.6" height="1.6" fill="#4fa8ee" />
<path d="M578.6 70.4 C578.8 65.6 582 62.6 587.2 62.4" fill="none" stroke="#c3c7ce" stroke-width="1.1" />
<path d="M581.6 70.4 C581.8 67 583.8 65.2 587.2 65.2" fill="none" stroke="#4fa8ee" stroke-width="1.2" />
<path d="M578.6 70.4 H581.8 M587.2 62.4 V65.4" fill="none" stroke="#c3c7ce" stroke-width="0.9" />
<path d="M591 62 V70.2 H598 M591 66.4 H598" fill="none" stroke="#bfc3ca" stroke-width="1.0" />
<path d="M595 61.6 V70.2" fill="none" stroke="#4fa8ee" stroke-width="1.1" />
<rect x="2.9" y="75.7" width="12.6" height="231.1" fill="none" stroke="#2a313c" stroke-width="1"/>
<rect x="4.4" y="76.8" width="7.6" height="1.7" fill="#6d7686" />
<g transform="translate(3.7 81.2) scale(0.625)"><path d="M2.2 14 L14.2 2" fill="none" stroke="#e6e8eb" stroke-width="1.3" /><rect x="0.9000000000000001" y="12.7" width="2.6" height="2.6" fill="#4fa8ee" stroke="none" stroke-width="1" /><rect x="12.899999999999999" y="0.7" width="2.6" height="2.6" fill="#4fa8ee" stroke="none" stroke-width="1" /></g>
<g transform="translate(3.7 92.6) scale(0.625)"><path d="M2 14 L14 2" fill="none" stroke="#e6e8eb" stroke-width="1.3" /><path d="M0.8 15.2 L1.2 11.6 L4.4 14.8 Z M15.2 0.8 L11.6 1.2 L14.8 4.4 Z" fill="#f2f3f5" stroke="none" stroke-width="1" /><rect x="4.7" y="8.7" width="2.6" height="2.6" fill="#4fa8ee" stroke="none" stroke-width="1" /><rect x="8.299999999999999" y="5.1000000000000005" width="2.6" height="2.6" fill="#4fa8ee" stroke="none" stroke-width="1" /></g>
<g transform="translate(3.7 104.8) scale(0.625)"><path d="M1.6 11.6 H9.6 C15 11.6 15 4.4 9.8 4.4" fill="none" stroke="#e6e8eb" stroke-width="1.3" /><rect x="0.6000000000000001" y="10.4" width="2.4" height="2.4" fill="#4fa8ee" stroke="none" stroke-width="1" /><rect x="4.2" y="10.4" width="2.4" height="2.4" fill="#4fa8ee" stroke="none" stroke-width="1" /><rect x="7.999999999999999" y="10.4" width="2.4" height="2.4" fill="#4fa8ee" stroke="none" stroke-width="1" /><rect x="8.200000000000001" y="3.2" width="2.4" height="2.4" fill="#4fa8ee" stroke="none" stroke-width="1" /></g>
<g transform="translate(3.7 117) scale(0.625)"><path d="M8 1.6 L14.6 6.4 L12 14 H4 L1.4 6.4 Z" fill="none" stroke="#e6e8eb" stroke-width="1.3" /><rect x="6.7" y="6.8999999999999995" width="2.6" height="2.6" fill="#4fa8ee" stroke="none" stroke-width="1" /><rect x="10.7" y="12.7" width="2.6" height="2.6" fill="#4fa8ee" stroke="none" stroke-width="1" /></g>
<g transform="translate(3.7 129) scale(0.625)"><rect x="2.4" y="3.6" width="11.6" height="8.8" fill="none" stroke="#e6e8eb" stroke-width="1.3" /><rect x="1.0999999999999999" y="2.3" width="2.6" height="2.6" fill="#4fa8ee" stroke="none" stroke-width="1" /><rect x="12.7" y="11.1" width="2.6" height="2.6" fill="#4fa8ee" stroke="none" stroke-width="1" /></g>
<g transform="translate(3.7 141) scale(0.625)"><path d="M2 14 C2.4 7.6 7 2.6 14 2" fill="none" stroke="#e6e8eb" stroke-width="1.3" /><rect x="0.7" y="12.7" width="2.6" height="2.6" fill="#4fa8ee" stroke="none" stroke-width="1" /><rect x="4.1000000000000005" y="5.3" width="2.6" height="2.6" fill="#4fa8ee" stroke="none" stroke-width="1" /><rect x="12.7" y="0.7" width="2.6" height="2.6" fill="#4fa8ee" stroke="none" stroke-width="1" /></g>
<g transform="translate(3.7 152.7) scale(0.625)"><circle cx="8" cy="8" r="6.6" fill="none" stroke="#e6e8eb" stroke-width="1.3"/><path d="M8 8 L12.6 3.4" fill="none" stroke="#cfd2d7" stroke-width="1.1" /><rect x="6.7" y="6.7" width="2.6" height="2.6" fill="#4fa8ee" stroke="none" stroke-width="1" /><rect x="11.0" y="2.2" width="2.8" height="2.8" fill="#4fa8ee" stroke="none" stroke-width="1" /></g>
<g transform="translate(3.7 164.5) scale(0.625)"><path d="M3.4 3.4 C6 1.6 8 3.6 9.6 2.6 C13 2.4 15 6 13.6 9.6 C13.2 12.8 9.4 14.8 6.6 13.6 C3.6 13.2 1.8 10.4 2.8 7.6 C1.8 6 2.2 4.4 3.4 3.4 Z" fill="none" stroke="#d9dbdf" stroke-width="1.3" /></g>
<g transform="translate(3.7 176.8) scale(0.625)"><path d="M2 14.4 C3 8 5 5.4 6.4 6 C8 7 8 11 10 11.6 C12.4 11.6 13.4 7 14 1.8" fill="none" stroke="#e6e8eb" stroke-width="1.3" /><rect x="0.8" y="13.200000000000001" width="2.4" height="2.4" fill="#4fa8ee" stroke="none" stroke-width="1" /><rect x="4.8" y="4.6" width="2.4" height="2.4" fill="#4fa8ee" stroke="none" stroke-width="1" /><rect x="8.8" y="10.4" width="2.4" height="2.4" fill="#4fa8ee" stroke="none" stroke-width="1" /><rect x="12.8" y="0.8" width="2.4" height="2.4" fill="#4fa8ee" stroke="none" stroke-width="1" /></g>
<g transform="translate(3.7 188.4) scale(0.625)"><ellipse cx="8" cy="8.4" rx="6.6" ry="4" fill="none" stroke="#e6e8eb" stroke-width="1.3"/><rect x="0.19999999999999996" y="7.2" width="2.4" height="2.4" fill="#4fa8ee" stroke="none" stroke-width="1" /><rect x="13.4" y="7.2" width="2.4" height="2.4" fill="#4fa8ee" stroke="none" stroke-width="1" /><rect x="6.8" y="3.2" width="2.4" height="2.4" fill="#4fa8ee" stroke="none" stroke-width="1" /></g>
<g transform="translate(3.7 201) scale(0.625)"><rect x="8" y="0.8" width="6.4" height="8.6" fill="#6cb8f2" stroke="none" stroke-width="1" /><path d="M8 0.8 H11.6 L14.4 3.6" fill="none" stroke="#d9ecfb" stroke-width="0.8" /><path d="M1.6 14 V6 H7 V9.4" fill="none" stroke="#bfc3cb" stroke-width="1.3" /><path d="M1.6 9.8 H6.6" fill="none" stroke="#bfc3cb" stroke-width="1.2" /><circle cx="9.6" cy="12" r="2.8" fill="#3b4453" stroke="#bfc3cb" stroke-width="1.3"/><rect x="11" y="9.4" width="4" height="4.6" fill="#eef0f2" stroke="none" stroke-width="1" /></g>
<g transform="translate(3.7 213.2) scale(0.625)"><path d="M1.6 14 V5.6 H8.4 V8" fill="none" stroke="#bfc3cb" stroke-width="1.3" /><path d="M1.6 9.8 H6.6" fill="none" stroke="#bfc3cb" stroke-width="1.2" /><circle cx="10" cy="12" r="2.8" fill="none" stroke="#bfc3cb" stroke-width="1.3"/><path d="M12.6 0.8 L13.5 2.9 L15.8 3.1 L14 4.5 L14.6 6.8 L12.6 5.6 L10.6 6.8 L11.2 4.5 L9.4 3.1 L11.7 2.9 Z" fill="#f6c343" stroke="none" stroke-width="1" /></g>
<g transform="translate(3.7 224.4) scale(0.625)"><circle cx="8" cy="2.4" r="1.5" fill="#d3d6db" stroke="none" stroke-width="1"/><circle cx="8" cy="13.6" r="1.5" fill="#d3d6db" stroke="none" stroke-width="1"/><circle cx="2.8" cy="8" r="1.5" fill="#d3d6db" stroke="none" stroke-width="1"/><circle cx="13.2" cy="8" r="1.5" fill="#d3d6db" stroke="none" stroke-width="1"/></g>
<g transform="translate(3.7 236.4) scale(0.625)"><path d="M3 0.8 V15.2 M13 0.8 V15.2 M0.8 3 H15.2 M0.8 13 H15.2" fill="none" stroke="#d3d6db" stroke-width="1.2" /><rect x="4.4" y="4.4" width="7.2" height="7.2" fill="#3f86d4" stroke="none" stroke-width="1" /></g>
<g transform="translate(3.7 248.2) scale(0.625)"><path d="M3 0.8 V15.2 M13 0.8 V15.2 M0.8 3 H15.2 M0.8 13 H15.2" fill="none" stroke="#d3d6db" stroke-width="1.2" /><rect x="4.4" y="4.4" width="7.2" height="3.6" fill="#5fb0f2" stroke="none" stroke-width="1" /><rect x="4.4" y="8" width="7.2" height="3.6" fill="#2f6db8" stroke="none" stroke-width="1" /></g>
<g transform="translate(3.7 260.2) scale(0.625)"><path d="M1.4 2.4 H9.6 L14.6 7.4 V13.6 H1.4 Z" fill="#eef0f2" stroke="none" stroke-width="1" /><circle cx="6" cy="8.4" r="2.2" fill="#3b4453" stroke="none" stroke-width="1"/></g>
<g transform="translate(3.7 272.6) scale(0.625)"><rect x="1.4" y="1.6" width="13.2" height="12.8" fill="none" stroke="#e6e8eb" stroke-width="1.3" /><path d="M1.4 5.2 H14.6 M1.4 9.6 H14.6 M5.8 5.2 V14.4 M10.2 5.2 V14.4" fill="none" stroke="#e6e8eb" stroke-width="1.0" /><rect x="1.4" y="1.6" width="13.2" height="3.6" fill="#cfd2d7" stroke="none" stroke-width="1" /></g>
<g transform="translate(3.7 284) scale(0.625)"><path d="M1.8 15 L8 1.4 L14.2 15 M4.2 10 H11.8" fill="none" stroke="#eef0f2" stroke-width="1.7" /></g>
<g transform="translate(3.7 296) scale(0.625)"><circle cx="3.8" cy="4.2" r="3.3" fill="#3fd04f" stroke="none" stroke-width="1"/><circle cx="11.8" cy="12.4" r="3.3" fill="#6cc4ff" stroke="none" stroke-width="1"/><path d="M6.6 3.6 C10 3 12 5 12 7.6" fill="none" stroke="#eef0f2" stroke-width="1.7" /><path d="M9.6 7 L12.2 9.8 L14.6 6.6 Z" fill="#eef0f2" stroke="none" stroke-width="1" /></g>
<rect x="583.8" y="75.7" width="12.2" height="220" fill="none" stroke="#2a313c" stroke-width="1"/>
<rect x="583.8" y="296.2" width="12.2" height="79.6" fill="none" stroke="#2a313c" stroke-width="1"/>
<rect x="584.8" y="76.8" width="7.6" height="1.6" fill="#6d7686" />
<rect x="584.8" y="297.4" width="7.6" height="1.6" fill="#6d7686" />
<rect x="584.6" y="349.6" width="9.6" height="0.9" fill="#aab0ba" />
<g transform="translate(584.2 81) scale(0.625)"><path d="M3.2 11.4 L12 1 L15.2 3.6 L6.4 14.2 Z" fill="#f5d055" stroke="none" stroke-width="1" /><path d="M3.4 11.6 L1.4 14 C0.8 15.4 2.6 16.6 4 15.8 L6.2 14 Z" fill="#ee4a62" stroke="none" stroke-width="1" /><path d="M8 14.8 H14.8" fill="none" stroke="#4fa8ee" stroke-width="1.5" /></g>
<g transform="translate(584.2 92.8) scale(0.625)"><circle cx="3.4" cy="3.6" r="2.3" fill="none" stroke="#e6e8eb" stroke-width="1.3"/><path d="M6.4 3.4 H11.4 V6.4" fill="none" stroke="#e6e8eb" stroke-width="1.3" /><path d="M9.6 5.4 L11.4 8 L13.2 5.4 Z" fill="#e6e8eb" stroke="none" stroke-width="1" /><circle cx="6.4" cy="11.4" r="2.6" fill="none" stroke="#4fa8ee" stroke-width="1.4"/><circle cx="11.8" cy="11.4" r="2.6" fill="none" stroke="#4fa8ee" stroke-width="1.4"/></g>
<g transform="translate(584.2 104.8) scale(0.625)"><path d="M6.6 2.4 V13.6 H1.4 Z" fill="none" stroke="#e6e8eb" stroke-width="1.3" /><path d="M9.4 2.4 V13.6 H14.6 Z" fill="#3f86d4" stroke="#4fa8ee" stroke-width="1.3" /></g>
<g transform="translate(584.2 116.6) scale(0.625)"><path d="M15 2 H7.6 C-0.6 2 -0.6 14 7.6 14 H15" fill="none" stroke="#4fa8ee" stroke-width="1.7" /><path d="M15 5.6 H8 C4.6 5.6 4.6 10.4 8 10.4 H15" fill="none" stroke="#e6e8eb" stroke-width="1.5" /></g>
<g transform="translate(584.2 128.8) scale(0.625)"><rect x="1.4" y="1.4" width="5" height="5" fill="none" stroke="#e6e8eb" stroke-width="1.3" /><rect x="9.6" y="1.4" width="5" height="5" fill="none" stroke="#4fa8ee" stroke-width="1.3" /><rect x="1.4" y="9.6" width="5" height="5" fill="none" stroke="#4fa8ee" stroke-width="1.3" /><rect x="9.6" y="9.6" width="5" height="5" fill="none" stroke="#4fa8ee" stroke-width="1.3" /><rect x="12.4" y="12.4" width="3" height="3" fill="#f2f3f5" stroke="none" stroke-width="1" /></g>
<g transform="translate(584.2 140.5) scale(0.625)"><path d="M8 1 V15 M1 8 H15" fill="none" stroke="#eef0f2" stroke-width="1.7" /><path d="M8 0 L10.8 3.4 H5.2 Z M8 16 L10.8 12.6 H5.2 Z M0 8 L3.4 5.2 V10.8 Z M16 8 L12.6 5.2 V10.8 Z" fill="#eef0f2" stroke="none" stroke-width="1" /></g>
<g transform="translate(584.2 153.4) scale(0.625)"><path d="M10.6 2.4 A6 6 0 1 0 14 8.6" fill="none" stroke="#e6e8eb" stroke-width="1.6" /><path d="M9.4 0 L13.6 2.8 L9.6 5.4 Z" fill="#e6e8eb" stroke="none" stroke-width="1" /></g>
<g transform="translate(584.2 165) scale(0.625)"><path d="M1.4 7 V1.4 H14.6 V14.6 H9" fill="none" stroke="#4fa8ee" stroke-width="1.5" /><rect x="1.4" y="8.4" width="6.2" height="6.2" fill="none" stroke="#e6e8eb" stroke-width="1.3" /><rect x="3.4" y="10.4" width="2.2" height="2.2" fill="#c3c7ce" stroke="none" stroke-width="1" /></g>
<g transform="translate(584.2 176.6) scale(0.625)"><path d="M7.6 1.4 H1.8 V14.2 H7.6" fill="none" stroke="#e6e8eb" stroke-width="1.4" /><path d="M9 1.4 L13.6 14.2 H7.6" fill="none" stroke="#4fa8ee" stroke-width="1.5" /><path d="M4.4 9.4 H9 M8 7.4 L10.6 9.4 L8 11.4 Z" fill="#eef0f2" stroke="#eef0f2" stroke-width="1.1" /></g>
<g transform="translate(584.2 188.6) scale(0.625)"><path d="M1.4 2.2 H10" fill="none" stroke="#4fa8ee" stroke-width="1.7" /><path d="M11.4 2 H14.6" fill="none" stroke="#9aa0ab" stroke-width="1.2" /><path d="M4 3.6 L10.6 12.6 M11 3.6 L4.6 12.6" fill="none" stroke="#eef0f2" stroke-width="1.5" /><circle cx="4" cy="13.6" r="1.8" fill="none" stroke="#eef0f2" stroke-width="1.2"/><circle cx="11.2" cy="13.6" r="1.8" fill="none" stroke="#eef0f2" stroke-width="1.2"/></g>
<g transform="translate(584.2 200.4) scale(0.625)"><path d="M13.4 1.4 V14.6" fill="none" stroke="#e6e8eb" stroke-width="1.6" /><path d="M1.4 6 H10" fill="none" stroke="#e6e8eb" stroke-width="1.4" /><path d="M8.6 3.6 L12.2 6 L8.6 8.4 Z" fill="#e6e8eb" stroke="none" stroke-width="1" /><path d="M3.6 11 H12.4" fill="none" stroke="#4fa8ee" stroke-width="1.8" /></g>
<g transform="translate(584.2 212.4) scale(0.625)"><path d="M9.6 4 H1.8 V13.6 H14.2 V4 H12.4" fill="none" stroke="#e6e8eb" stroke-width="1.4" /><path d="M11 0.8 V6.4" fill="none" stroke="#4fa8ee" stroke-width="1.7" /></g>
<g transform="translate(584.2 224) scale(0.625)"><path d="M4.6 4 H1.8 V13.6 H14.2 V4 H11.4" fill="none" stroke="#e6e8eb" stroke-width="1.4" /><path d="M5.6 0.8 V5.6 M10.4 0.8 V5.6" fill="none" stroke="#4fa8ee" stroke-width="1.6" /></g>
<g transform="translate(584.2 236.8) scale(0.625)"><path d="M0.8 8 H15.2" fill="none" stroke="#e6e8eb" stroke-width="1.3" /><circle cx="5.6" cy="8" r="1.7" fill="#4fa8ee" stroke="none" stroke-width="1"/><circle cx="10.4" cy="8" r="1.7" fill="#4fa8ee" stroke="none" stroke-width="1"/></g>
<g transform="translate(584.2 247.2) scale(0.625)"><path d="M1.6 15 V9.4 M8 2 H15" fill="none" stroke="#c3c7ce" stroke-width="1.4" /><path d="M1.6 9.4 L8 2" fill="none" stroke="#4fa8ee" stroke-width="1.5" /></g>
<g transform="translate(584.2 259.6) scale(0.625)"><path d="M1.6 15 V11 M10 2 H15" fill="none" stroke="#e6e8eb" stroke-width="1.4" /><path d="M1.6 11 C1.8 5.6 4.8 2.2 10 2" fill="none" stroke="#4fa8ee" stroke-width="1.6" /></g>
<g transform="translate(584.2 271.8) scale(0.625)"><path d="M1.6 15 C2 11.4 3 9.6 4.8 8.8" fill="none" stroke="#e6e8eb" stroke-width="1.4" /><path d="M4.8 8.8 C7 7.6 8 10.6 10.4 10.2" fill="none" stroke="#4fa8ee" stroke-width="1.5" /><path d="M10.4 10.2 C12.6 9.4 13.6 6 14 1.4" fill="none" stroke="#e6e8eb" stroke-width="1.4" /></g>
<g transform="translate(584.2 283.8) scale(0.625)"><path d="M2 6.4 L6 2 H14 V10 L10 14.4" fill="none" stroke="#4fa8ee" stroke-width="1.5" /><rect x="2" y="6.4" width="8" height="8" fill="none" stroke="#e6e8eb" stroke-width="1.4" /><rect x="4.4" y="8.8" width="3.2" height="3.2" fill="#c3c7ce" stroke="none" stroke-width="1" /></g>
<g transform="translate(584.2 301.4) scale(0.625)"><rect x="1" y="1" width="8" height="7" fill="#e6e8eb" stroke="#3b4453" stroke-width="0.6" /><rect x="10.6" y="10.6" width="4.6" height="4.2" fill="#aab0ba" stroke="#3b4453" stroke-width="0.6" /><rect x="4.4" y="4.4" width="9.2" height="8" fill="#5cb2f6" stroke="#3b4453" stroke-width="0.6" /><path d="M4.4 8.4 H13.6 M9 4.4 V12.4" fill="none" stroke="#bfe0fb" stroke-width="0.6" /></g>
<g transform="translate(584.2 313.4) scale(0.625)"><rect x="5" y="5" width="8" height="6.4" fill="#5cb2f6" stroke="#3b4453" stroke-width="0.6" /><rect x="1" y="1" width="7" height="6" fill="#e6e8eb" stroke="#3b4453" stroke-width="0.6" /><rect x="9.6" y="9.4" width="6" height="5.6" fill="#e6e8eb" stroke="#3b4453" stroke-width="0.6" /></g>
<g transform="translate(584.2 326) scale(0.625)"><rect x="1" y="1" width="7.6" height="7" fill="#e6e8eb" stroke="#3b4453" stroke-width="0.6" /><rect x="5" y="5" width="10" height="9" fill="#5cb2f6" stroke="#3b4453" stroke-width="0.6" /><path d="M5 9.4 H15 M10 5 V14" fill="none" stroke="#bfe0fb" stroke-width="0.6" /></g>
<g transform="translate(584.2 337.8) scale(0.625)"><rect x="6.6" y="6.6" width="8.4" height="8" fill="#5cb2f6" stroke="#3b4453" stroke-width="0.6" /><rect x="1" y="1" width="9" height="8.4" fill="#e6e8eb" stroke="#3b4453" stroke-width="0.6" /></g>
<g transform="translate(584.2 353.4) scale(0.625)"><text x="0.4" y="6" font-size="6.6" font-weight="bold" fill="#4fa8ee">ABC</text><rect x="4" y="7" width="10" height="7.4" fill="#b7bcc5" stroke="#3b4453" stroke-width="0.6" /><path d="M14 5.4 V15" fill="none" stroke="#e6e8eb" stroke-width="1.2" /></g>
<g transform="translate(584.2 364.6) scale(0.625)"><rect x="1" y="1" width="11.6" height="7.6" fill="#e6e8eb" stroke="#3b4453" stroke-width="0.6" /><path d="M8 10.4 V15 M14.4 10.4 V15 M8 12.6 H14.4" fill="none" stroke="#4fa8ee" stroke-width="1.2" /><path d="M1 10 V13" fill="none" stroke="#aab0ba" stroke-width="1.2" /></g>
<path d="M152.4 455.2 L156.6 450.6 C155.8 448.6 157.4 446.8 159.6 447.4 L157.8 449.2 L158.6 450.6 L160.2 450.4 L160.4 448.2 C161.2 450.2 159.8 452 157.8 451.6 L153.6 456.2 Z" fill="#e6e8eb" stroke="none" stroke-width="1" />
<rect x="165.2" y="447.4" width="8.8" height="6.6" fill="#f4f4f4" stroke="#3a3f48" stroke-width="0.9"/>
<rect x="165.2" y="447.4" width="8.8" height="1.7" fill="#3a3f48" />
<path d="M166.8 450.6 L168.4 451.7 L166.8 452.8" fill="none" stroke="#3a3f48" stroke-width="0.7" />
<path d="M175.50 450.20 H178.90 L177.20 452.20 Z" fill="#3a3f48"/>
<rect x="313" y="461.0" width="15.399999999999977" height="13.3" fill="#333b49" />
<g><text x="314.70" y="470.00" font-size="6.1" font-weight="bold" fill="#eef0f2" textLength="12.2" lengthAdjust="spacingAndGlyphs">模型</text></g>
<rect x="329.2" y="461.0" width="12.0" height="13.3" fill="#4c86c6" />
<path d="M331 465 H339.4 M331 467.9 H339.4 M331 470.8 H339.4 M332.6 463.4 V472.4 M335.2 463.4 V472.4 M337.8 463.4 V472.4" fill="none" stroke="#f4f6f8" stroke-width="0.8" />
<rect x="341.8" y="461.0" width="21.80000000000001" height="13.3" fill="#333b49" />
<rect x="344.84999999999997" y="464.34999999999997" width="1.1" height="1.1" fill="#dfe1e5" />
<rect x="344.84999999999997" y="467.34999999999997" width="1.1" height="1.1" fill="#dfe1e5" />
<rect x="344.84999999999997" y="470.34999999999997" width="1.1" height="1.1" fill="#dfe1e5" />
<rect x="347.84999999999997" y="464.34999999999997" width="1.1" height="1.1" fill="#dfe1e5" />
<rect x="347.84999999999997" y="467.34999999999997" width="1.1" height="1.1" fill="#dfe1e5" />
<rect x="347.84999999999997" y="470.34999999999997" width="1.1" height="1.1" fill="#dfe1e5" />
<rect x="350.84999999999997" y="464.34999999999997" width="1.1" height="1.1" fill="#dfe1e5" />
<rect x="350.84999999999997" y="467.34999999999997" width="1.1" height="1.1" fill="#dfe1e5" />
<rect x="350.84999999999997" y="470.34999999999997" width="1.1" height="1.1" fill="#dfe1e5" />
<path d="M357.30 466.90 H361.30 L359.30 469.10 Z" fill="#eceef1"/>
<rect x="365" y="461.0" width="56" height="13.3" fill="#333b49" />
<path d="M368 463.4 V472 H376.2" fill="none" stroke="#d3d6db" stroke-width="1.0" />
<rect x="368" y="469" width="3" height="3" fill="none" stroke="#d3d6db" stroke-width="0.7"/>
<rect x="378.6" y="461.0" width="12.399999999999977" height="13.3" fill="#4c86c6" />
<circle cx="384.4" cy="468" r="3.6" fill="none" stroke="#f4f6f8" stroke-width="1.0"/>
<path d="M384.4 468 H389.6 M384.4 468 L388.6 464" fill="none" stroke="#f4f6f8" stroke-width="0.9" />
<path d="M387.6 466.4 L390 468 L387.6 469.6 Z" fill="#f4f6f8" stroke="none" stroke-width="1" />
<path d="M393.70 466.90 H397.70 L395.70 469.10 Z" fill="#eceef1"/>
<line x1="403" y1="463.8" x2="409.6" y2="472.2" stroke="#e04a4a" stroke-width="1.0" />
<line x1="406.2" y1="463" x2="406.2" y2="473" stroke="#3fc45a" stroke-width="1.0" />
<rect x="405.4" y="467.2" width="1.6" height="1.6" fill="#eef0f2" />
<path d="M415.30 466.90 H419.30 L417.30 469.10 Z" fill="#eceef1"/>
<rect x="422.8" y="461.0" width="12.199999999999989" height="13.3" fill="#4c86c6" />
<path d="M425 471.6 H433.4 M425 471.6 L432.6 464" fill="none" stroke="#f4f6f8" stroke-width="1.0" />
<rect x="428.2" y="467.2" width="1.7" height="1.7" fill="#f4f6f8" />
<rect x="435.8" y="461.0" width="12.399999999999977" height="13.3" fill="#4c86c6" />
<rect x="438.4" y="465" width="7.6" height="7.2" fill="#5b93d0" stroke="#d6e6f6" stroke-width="1.0" rx="0.8"/>
<circle cx="438.6" cy="465.2" r="1.6" fill="#4c86c6" stroke="#d6e6f6" stroke-width="0.8"/>
<rect x="448.6" y="461.0" width="8.0" height="13.3" fill="#333b49" />
<path d="M450.80 466.90 H454.80 L452.80 469.10 Z" fill="#eceef1"/>
<rect x="459.2" y="461.0" width="12.0" height="13.3" fill="#4c86c6" />
<path d="M464.3 462.8 L465.6 468.2 L468.90000000000003 471.4 L467.7 472.8 L464.3 470.6 L460.90000000000003 472.8 L459.7 471.4 L463.0 468.2 Z" fill="#f2f3f5" stroke="none" stroke-width="1" />
<circle cx="468.4" cy="465" r="1.3" fill="none" stroke="#e3ecf6" stroke-width="0.7"/>
<rect x="472" y="461.0" width="44.200000000000045" height="13.3" fill="#333b49" />
<path d="M477.9 462.8 L479.2 468.2 L482.5 471.4 L481.29999999999995 472.8 L477.9 470.6 L474.5 472.8 L473.29999999999995 471.4 L476.59999999999997 468.2 Z" fill="#f2f3f5" stroke="none" stroke-width="1" />
<path d="M480.4 464 L482.2 465.4 L480.4 466.8 Z" fill="#f2f3f5" stroke="none" stroke-width="1" />
<path d="M491.7 462.8 L493.0 468.2 L496.3 471.4 L495.09999999999997 472.8 L491.7 470.6 L488.3 472.8 L487.09999999999997 471.4 L490.4 468.2 Z" fill="#f2f3f5" stroke="none" stroke-width="1" />
<text x="500.4" y="470.3" font-size="6.4" fill="#f2f3f5" text-anchor="start" font-weight="bold" textLength="7.4" lengthAdjust="spacingAndGlyphs">1:1</text>
<path d="M510.00 466.90 H514.00 L512.00 469.10 Z" fill="#eceef1"/>
<rect x="518.4" y="461.0" width="20.600000000000023" height="13.3" fill="#333b49" />
<path d="M529.41 466.67 L529.41 468.53 L527.85 468.85 L527.85 468.87 L528.72 470.20 L527.40 471.52 L526.07 470.65 L526.05 470.65 L525.73 472.21 L523.87 472.21 L523.55 470.65 L523.53 470.65 L522.20 471.52 L520.88 470.20 L521.75 468.87 L521.75 468.85 L520.19 468.53 L520.19 466.67 L521.75 466.35 L521.75 466.33 L520.88 465.00 L522.20 463.68 L523.53 464.55 L523.55 464.55 L523.87 462.99 L525.73 462.99 L526.05 464.55 L526.07 464.55 L527.40 463.68 L528.72 465.00 L527.85 466.33 L527.85 466.35 Z" fill="#eef0f2"/>
<circle cx="524.8" cy="467.6" r="1.7" fill="#333b49"/>
<path d="M533.60 466.90 H537.60 L535.60 469.10 Z" fill="#eceef1"/>
<rect x="540.4" y="461.0" width="12.600000000000023" height="13.3" fill="#333b49" />
<path d="M542.6 467.8 H551 M546.8 463.6 V472" fill="none" stroke="#f2f3f5" stroke-width="1.4" />
<rect x="554.4" y="461.0" width="14.200000000000045" height="13.3" fill="#333b49" />
<rect x="557.2" y="463.4" width="3.4" height="3.4" fill="none" stroke="#d9dbdf" stroke-width="0.8"/>
<circle cx="564" cy="467" r="1.9" fill="none" stroke="#d9dbdf" stroke-width="0.8"/>
<path d="M560.2 468.8 L562.2 472.2 H558.2 Z" fill="none" stroke="#d9dbdf" stroke-width="0.8" />
<rect x="570" y="461.0" width="13.600000000000023" height="13.3" fill="#333b49" />
<rect x="572.3" y="464.3" width="8.6" height="6.8" fill="none" stroke="#d9dbdf" stroke-width="1.0"/>
<path d="M574.2 470 L576.4 468.2 M577.6 467.2 L579.6 465.6" fill="none" stroke="#d9dbdf" stroke-width="0.8" />
<path d="M573.6 468.6 V470.4 H575.6 Z M577.8 465.2 H579.8 V467.2 Z" fill="#d9dbdf" stroke="none" stroke-width="1" />
<rect x="584.6" y="461.0" width="13.399999999999977" height="13.3" fill="#333b49" />
<line x1="586.2" y1="464.7" x2="595.6" y2="464.7" stroke="#eef0f2" stroke-width="1.2" />
<line x1="586.2" y1="467.9" x2="595.6" y2="467.9" stroke="#eef0f2" stroke-width="1.2" />
<line x1="586.2" y1="471.1" x2="595.6" y2="471.1" stroke="#eef0f2" stroke-width="1.2" />
<rect x="598.3" y="1.1" width="1.7" height="475.5" fill="#1a1e26" />
</svg>
</body></html>
